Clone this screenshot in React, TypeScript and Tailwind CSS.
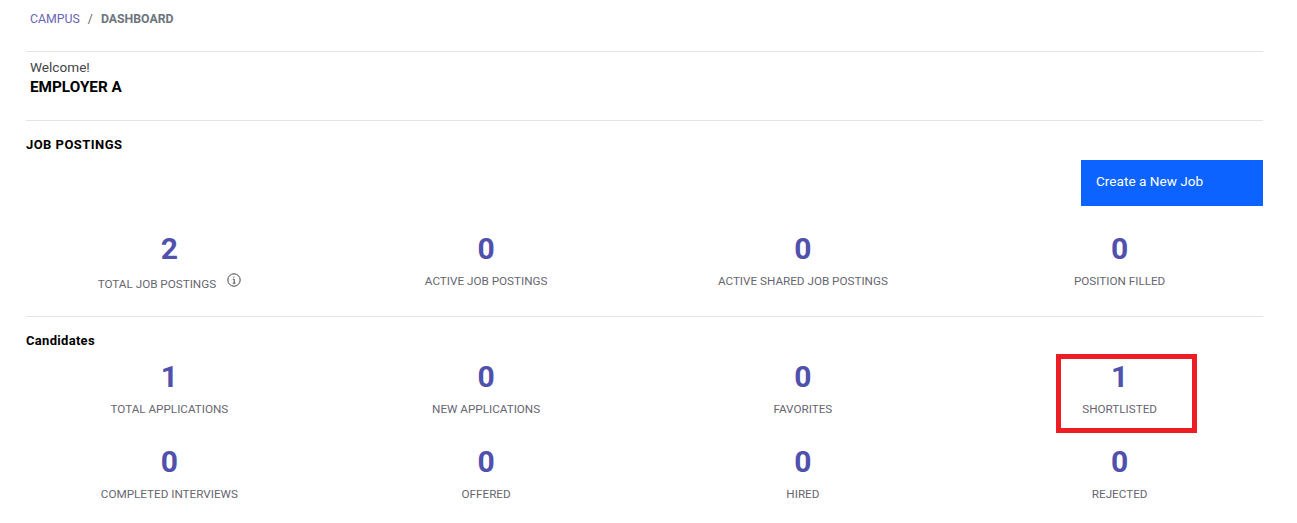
const roboto = "font-['Roboto',sans-serif]";

function Stat({ value, label, info }: { value: number; label: string; info?: boolean }) {
  return (
    <div className="flex flex-col items-center">
      <div className="h-[36px] text-[30px] leading-[36px] font-bold text-[#5050ad]">{value}</div>
      <div className="mt-[4px] flex h-[20px] items-center text-[11.7px] leading-[20px] text-[#666670]">
        <span className={info ? "mt-[6px]" : ""}>{label}</span>
        {info && (
          <svg className="ml-[11px] mt-[-3px]" width="14" height="14" viewBox="0 0 14 14" fill="none" stroke="#444" strokeWidth="1">
            <circle cx="7" cy="7" r="6.2" />
            <path d="M5.8 6.2H7.2V10M5.8 10.2H8.4M6.8 3.6V4.6" />
          </svg>
        )}
      </div>
    </div>
  );
}

export default function App() {
  return (
    <div className={`relative h-[523px] w-[1297px] overflow-hidden bg-white ${roboto}`}>
      <div className="mx-[26px] w-[1237px]">
        <div className="flex h-[51px] items-start pl-[4px] pt-[12px] text-[12.3px] leading-[14px]">
          <span className="text-[#6a64b4]">CAMPUS</span>
          <span className="mx-[8px] text-[#666]">/</span>
          <span className="font-bold text-[#6c757d]">DASHBOARD</span>
        </div>
        <div className="h-[69px] border-t border-[#e4e4e4] pl-[4px] pt-[7px]">
          <div className="text-[13.6px] leading-[17px] text-[#444]">Welcome!</div>
          <div className="mt-[2px] text-[15.3px] leading-[19px] font-bold text-black">EMPLOYER A</div>
        </div>
        <div className="h-[196px] border-t border-[#e4e4e4]">
          <div className="pt-[17px] text-[13px] leading-[14px] font-bold tracking-[0.45px] text-black">JOB POSTINGS</div>
          <div className="mt-[8px] flex justify-end">
            <button className="h-[46px] w-[182px] bg-[#0d63ff] pb-[4px] pl-[15px] text-left text-[13.6px] text-white">Create a New Job</button>
          </div>
          <div className="mx-[-15px] mt-[25px] grid grid-cols-4">
            <Stat value={2} label="TOTAL JOB POSTINGS" info />
            <Stat value={0} label="ACTIVE JOB POSTINGS" />
            <Stat value={0} label="ACTIVE SHARED JOB POSTINGS" />
            <Stat value={0} label="POSITION FILLED" />
          </div>
        </div>
        <div className="border-t border-[#e4e4e4]">
          <div className="pt-[17px] text-[13px] leading-[14px] font-bold tracking-[0.3px] text-black">Candidates</div>
          <div className="mx-[-15px] mt-[11px] grid grid-cols-4 gap-y-[25px]">
            <Stat value={1} label="TOTAL APPLICATIONS" />
            <Stat value={0} label="NEW APPLICATIONS" />
            <Stat value={0} label="FAVORITES" />
            <Stat value={1} label="SHORTLISTED" />
            <Stat value={0} label="COMPLETED INTERVIEWS" />
            <Stat value={0} label="OFFERED" />
            <Stat value={0} label="HIRED" />
            <Stat value={0} label="REJECTED" />
          </div>
        </div>
      </div>
      <div className="absolute left-[1056px] top-[354px] h-[79px] w-[141px] border-[5px] border-[#ee1c25]" />
    </div>
  );
}
